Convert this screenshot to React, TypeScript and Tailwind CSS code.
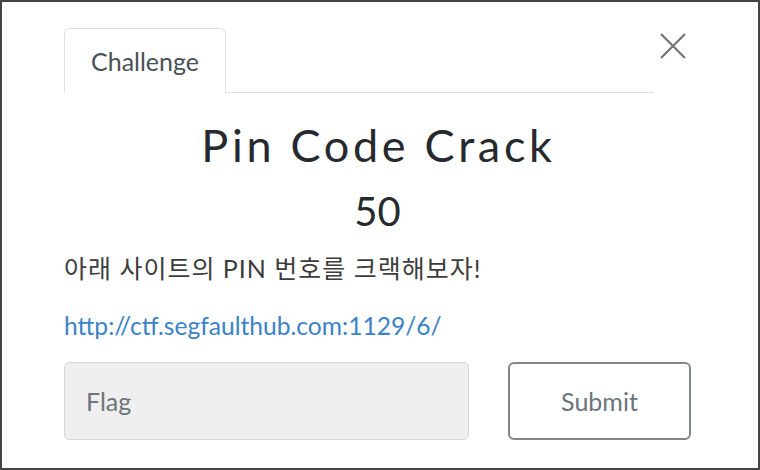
export default function App() {
  return (
    <div className="w-[760px] h-[470px] border-2 border-[#454545] bg-white font-['Lato','Noto_Sans_CJK_KR',sans-serif] text-[#212529]">
      <div className="pl-[62px] pr-[67px] pt-[26px]">
        <div className="flex items-start">
          <div className="flex w-[590px] items-end border-b border-[#dee2e6]">
            <div className="-mb-px flex h-[65px] w-[162px] items-center justify-center rounded-t-[6px] border border-b-0 border-[#dee2e6] bg-white pt-[1px] text-[25px] text-[#495057]">
              Challenge
            </div>
          </div>
          <button className="ml-[6px] mt-[5px] text-[#747474]" aria-label="Close">
            <svg width="26" height="26" viewBox="0 0 26 26" fill="none" stroke="currentColor" strokeWidth="2.2">
              <path d="M1 1L25 25M25 1L1 25" />
            </svg>
          </button>
        </div>

        <h2 className="mt-[25px] pl-[2px] text-center text-[45px] font-normal leading-[1.2] tracking-[3.7px] text-[#262a2e]">Pin Code Crack</h2>
        <h3 className="mt-[15px] text-center text-[40px] font-normal leading-[1.2] text-[#262a2e]">50</h3>

        <p className="mt-[15px] text-[25px] leading-[1.5] tracking-[1px] text-[#3d3d3d]">아래 사이트의 PIN 번호를 크랙해보자!</p>
        <a className="mt-[20px] block text-[24.6px] leading-[1.5] text-[#3b82c6]">http://ctf.segfaulthub.com:1129/6/</a>

        <div className="mt-[18px] flex items-center">
          <div className="flex h-[78px] w-[405px] items-center rounded-[5px] border border-[#d5d8db] bg-[#efefef] px-[21px] text-[25px] text-[#6c757d]">
            Flag
          </div>
          <button className="ml-auto h-[78px] w-[183px] rounded-[6px] border-2 border-[#80878d] text-[25px] text-[#6c757d]">
            Submit
          </button>
        </div>
      </div>
    </div>
  );
}
